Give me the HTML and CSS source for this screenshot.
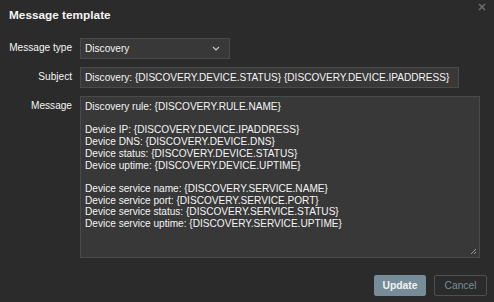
FILE: index.html
```html
<!DOCTYPE html>
<html lang="en">
<head>
    <meta charset="UTF-8">
    <title>Message template</title>
    <link rel="stylesheet" href="styles.css">
</head>
<body>
    <div class="dialog">
        <!-- Header -->
        <div class="dialog-header">
            <h4>Message template</h4>
            <span class="close-btn">
                <svg width="8" height="8" viewBox="0 0 8 8"><path d="M1 1L7 7M7 1L1 7" stroke="#6b6b6b" stroke-width="1.6"/></svg>
            </span>
        </div>

        <!-- Form -->
        <div class="form-grid">
            <label class="form-label">Message type</label>
            <div class="select-box">
                <span>Discovery</span>
                <svg width="8" height="5" viewBox="0 0 8 5"><path d="M1 1L4 4L7 1" stroke="#c8c8c8" stroke-width="1.2" fill="none"/></svg>
            </div>

            <label class="form-label">Subject</label>
            <div class="text-box">Discovery: {DISCOVERY.DEVICE.STATUS} {DISCOVERY.DEVICE.IPADDRESS}</div>

            <label class="form-label">Message</label>
            <div class="text-area">Discovery rule: {DISCOVERY.RULE.NAME}

Device IP: {DISCOVERY.DEVICE.IPADDRESS}
Device DNS: {DISCOVERY.DEVICE.DNS}
Device status: {DISCOVERY.DEVICE.STATUS}
Device uptime: {DISCOVERY.DEVICE.UPTIME}

Device service name: {DISCOVERY.SERVICE.NAME}
Device service port: {DISCOVERY.SERVICE.PORT}
Device service status: {DISCOVERY.SERVICE.STATUS}
Device service uptime: {DISCOVERY.SERVICE.UPTIME}<svg class="resize-grip" width="7" height="7" viewBox="0 0 7 7"><path d="M6 1L1 6M6 4L4 6" stroke="#9a9a9a" stroke-width="1"/></svg></div>
        </div>

        <!-- Footer -->
        <div class="dialog-footer">
            <button class="btn-primary">Update</button>
            <button class="btn-alt">Cancel</button>
        </div>
    </div>
</body>
</html>
```

FILE: styles.css
```css
/* Dark dialog */
body {
    background-color: #2b2b2b;
    color: #f4f4f4;
    font-family: "Liberation Sans", Arial, sans-serif;
    font-size: 10.1px;
    margin: 0;
    padding: 0;
}

.dialog {
    width: 494px;
    height: 302px;
    box-sizing: border-box;
    padding: 0 7px 0 8px;
}

.dialog-header {
    position: relative;
    height: 38px;
    padding-top: 7px;
    box-sizing: border-box;
}

.dialog-header h4 {
    margin: 0;
    font-size: 11.8px;
    font-weight: bold;
    line-height: 16px;
    padding-left: 1px;
}

.close-btn {
    position: absolute;
    right: 1px;
    top: 2px;
}

/* Form rows */
.form-grid {
    display: grid;
    grid-template-columns: 64px auto;
    column-gap: 8px;
    row-gap: 8px;
    align-items: start;
}

.form-label {
    text-align: right;
    line-height: 20px;
    white-space: nowrap;
}

.select-box {
    width: 150px;
    height: 21px;
    box-sizing: border-box;
    background-color: #383838;
    border: 1px solid #4a4a4a;
    display: flex;
    align-items: center;
    justify-content: space-between;
    padding: 0 9px 0 4px;
}

.text-box {
    width: 379px;
    height: 21px;
    box-sizing: border-box;
    background-color: #383838;
    border: 1px solid #4a4a4a;
    line-height: 19px;
    padding: 0 4px;
    white-space: nowrap;
}

.text-area {
    position: relative;
    width: 400px;
    height: 162px;
    box-sizing: border-box;
    background-color: #383838;
    border: 1px solid #4a4a4a;
    padding: 4px 4px;
    line-height: 11.7px;
    white-space: pre;
}

.resize-grip {
    position: absolute;
    right: 2px;
    bottom: 2px;
}

/* Footer buttons */
.dialog-footer {
    display: flex;
    justify-content: flex-end;
    gap: 8px;
    margin-top: 17px;
}

button {
    height: 21px;
    font-family: "Liberation Sans", Arial, sans-serif;
    font-size: 10.3px;
    border-radius: 2px;
    padding: 0;
}

.btn-primary {
    background-color: #768d99;
    color: #f2f2f2;
    border: 1px solid #768d99;
    font-weight: bold;
    width: 52px;
}

.btn-alt {
    background-color: #2b2b2b;
    color: #768d99;
    border: 1px solid #4f4f4f;
    width: 53px;
}
```
